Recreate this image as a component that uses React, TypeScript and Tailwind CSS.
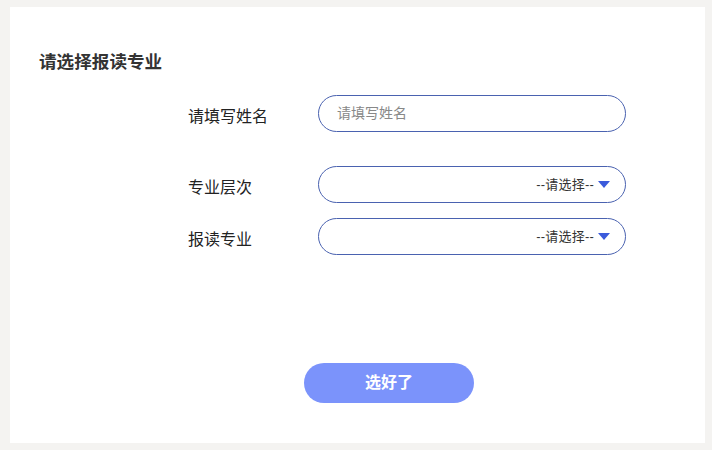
import React from "react";

const font = { fontFamily: '"Liberation Sans", "Noto Sans CJK SC", sans-serif' };

function Select() {
  return (
    <div className="w-[308px] h-[37px] rounded-full border border-[#4a62b0] flex items-center justify-end pr-[15px]">
      <span className="text-[13px] text-[#333] leading-none tracking-[0.2px]">--请选择--</span>
      <svg width="12" height="8" viewBox="0 0 12 8" className="ml-[4px]">
        <polygon points="0,0 12,0 6,7" fill="#3b5bdb" />
      </svg>
    </div>
  );
}

export default function App() {
  return (
    <div className="w-[712px] h-[450px] bg-[#f4f3f1] pt-[7px] pl-[10px]" style={font}>
      <div className="w-[695px] h-[436px] bg-white flex flex-col">
        <div className="mt-[42px] pl-[29px] text-[17.6px] font-bold text-[#333] leading-[26px]">请选择报读专业</div>
        <div className="mt-[20px] flex items-center pl-[178px]">
          <div className="w-[130px] text-[16px] text-[#222] pt-[6px]">请填写姓名</div>
          <div className="w-[308px] h-[37px] rounded-full border border-[#4a62b0] flex items-center pl-[18px]">
            <span className="text-[14px] text-[#888]">请填写姓名</span>
          </div>
        </div>
        <div className="mt-[34px] flex items-center pl-[178px]">
          <div className="w-[130px] text-[16px] text-[#222] pt-[6px]">专业层次</div>
          <Select />
        </div>
        <div className="mt-[15px] flex items-center pl-[178px]">
          <div className="w-[130px] text-[16px] text-[#222] pt-[6px]">报读专业</div>
          <Select />
        </div>
        <div className="mt-[108px] pl-[294px]">
          <button className="w-[170px] h-[40px] rounded-full bg-[#7b93fb] text-white text-[16px] font-bold">选好了</button>
        </div>
      </div>
    </div>
  );
}
